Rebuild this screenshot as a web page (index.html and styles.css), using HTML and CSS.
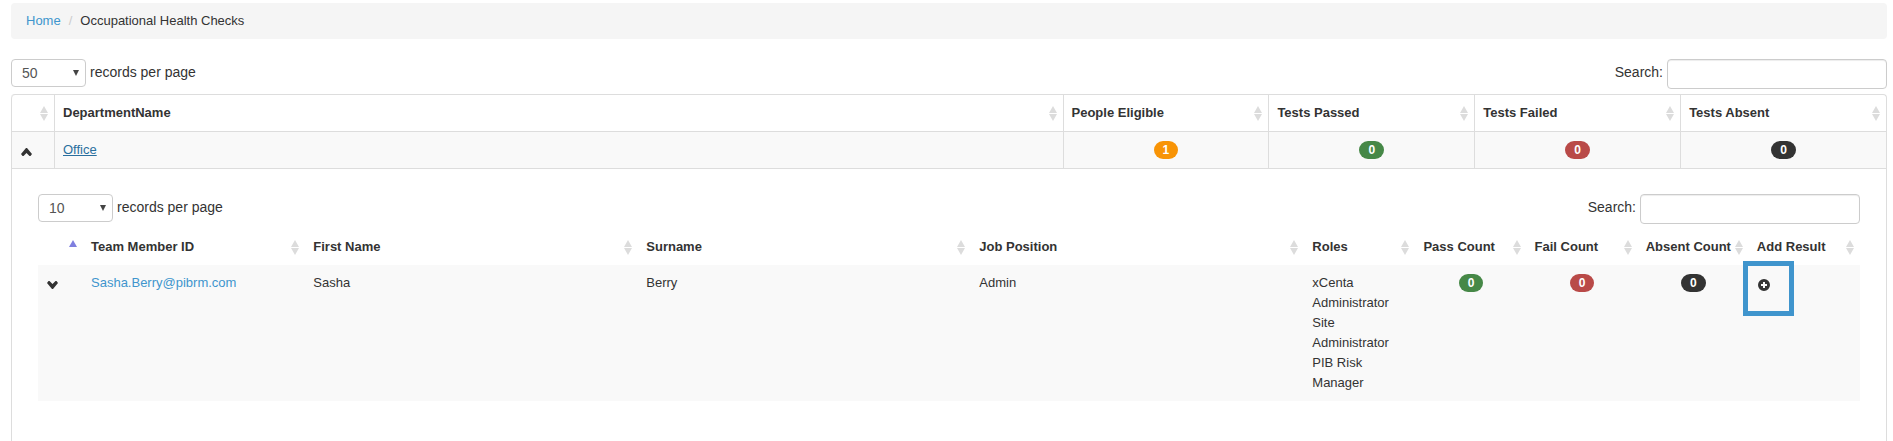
FILE: index.html
```html
<!DOCTYPE html>
<html lang="en">
<head>
    <meta charset="UTF-8">
    <meta name="viewport" content="width=device-width, initial-scale=1.0">
    <title>Occupational Health Checks</title>
    <link rel="stylesheet" href="styles.css">
</head>
<body>
    <svg class="sprite" aria-hidden="true">
        <symbol id="sort" viewBox="0 0 8 15">
            <path d="M4 0 L8 7 H0 Z M0 8 H8 L4 15 Z"/>
        </symbol>
        <symbol id="sort-asc" viewBox="0 0 8 15">
            <path d="M4 0 L8 7 H0 Z"/>
        </symbol>
        <symbol id="chevron-up" viewBox="0 0 14 14">
            <path d="M1 9 L6 3 H7 L12 9 L10.5 11 H9.5 L6.5 8 L3.5 11 H2.5 Z"/>
        </symbol>
        <symbol id="chevron-down" viewBox="0 0 14 14">
            <path d="M1 5 L2.5 3 H3.5 L6.5 6 L9.5 3 H10.5 L12 5 L7 11 H6 Z"/>
        </symbol>
        <symbol id="plus-sign" viewBox="0 0 14 14">
            <path fill-rule="evenodd" d="M7 1 A6 6 0 1 1 7 13 A6 6 0 1 1 7 1 Z M6 4 V6 H4 V8 H6 V10 H8 V8 H10 V6 H8 V4 Z"/>
        </symbol>
    </svg>

    <nav>
        <ol class="breadcrumb">
            <li><a href="#">Home</a></li>
            <li>Occupational Health Checks</li>
        </ol>
    </nav>

    <div class="table-tools">
        <label><select><option>10</option><option>25</option><option selected>50</option></select> records per page</label>
        <label>Search: <input type="text"></label>
    </div>

    <table class="table departments">
        <colgroup>
            <col class="col-toggle"><col><col class="col-tests"><col class="col-tests"><col class="col-tests"><col class="col-tests">
        </colgroup>
        <thead>
            <tr>
                <th><button class="sort" aria-label="Sort"><span></span><svg><use href="#sort"/></svg></button></th>
                <th><button class="sort">DepartmentName <svg><use href="#sort"/></svg></button></th>
                <th><button class="sort">People Eligible <svg><use href="#sort"/></svg></button></th>
                <th><button class="sort">Tests Passed <svg><use href="#sort"/></svg></button></th>
                <th><button class="sort">Tests Failed <svg><use href="#sort"/></svg></button></th>
                <th><button class="sort">Tests Absent <svg><use href="#sort"/></svg></button></th>
            </tr>
        </thead>
        <tbody>
            <tr class="odd">
                <td><button class="icon" aria-label="Hide people"><svg><use href="#chevron-up"/></svg></button></td>
                <td><a href="#" class="active">Office</a></td>
                <td class="center"><span class="badge badge-warning">1</span></td>
                <td class="center"><span class="badge badge-success">0</span></td>
                <td class="center"><span class="badge badge-important">0</span></td>
                <td class="center"><span class="badge badge-inverse">0</span></td>
            </tr>
            <tr>
                <td colspan="6" class="details">
                    <div class="table-tools">
                        <label><select><option selected>10</option><option>25</option><option>50</option></select> records per page</label>
                        <label>Search: <input type="text"></label>
                    </div>

                    <table class="table people">
                        <colgroup>
                            <col class="col-expand"><col class="col-member"><col><col><col>
                            <col class="col-count"><col class="col-count"><col class="col-count"><col class="col-count"><col class="col-count">
                        </colgroup>
                        <thead>
                            <tr>
                                <th><button class="sort sort-active" aria-label="Sort"><span></span><svg><use href="#sort-asc"/></svg></button></th>
                                <th><button class="sort">Team Member ID <svg><use href="#sort"/></svg></button></th>
                                <th><button class="sort">First Name <svg><use href="#sort"/></svg></button></th>
                                <th><button class="sort">Surname <svg><use href="#sort"/></svg></button></th>
                                <th><button class="sort">Job Position <svg><use href="#sort"/></svg></button></th>
                                <th><button class="sort">Roles <svg><use href="#sort"/></svg></button></th>
                                <th><button class="sort">Pass Count <svg><use href="#sort"/></svg></button></th>
                                <th><button class="sort">Fail Count <svg><use href="#sort"/></svg></button></th>
                                <th><button class="sort">Absent Count <svg><use href="#sort"/></svg></button></th>
                                <th><button class="sort">Add Result <svg><use href="#sort"/></svg></button></th>
                            </tr>
                        </thead>
                        <tbody>
                            <tr class="odd">
                                <td><button class="icon" aria-label="Show results"><svg><use href="#chevron-down"/></svg></button></td>
                                <td><a href="#">Sasha.Berry@pibrm.com</a></td>
                                <td>Sasha</td>
                                <td>Berry</td>
                                <td>Admin</td>
                                <td>xCenta Administrator<br>Site Administrator<br>PIB Risk Manager</td>
                                <td class="center"><span class="badge badge-success">0</span></td>
                                <td class="center"><span class="badge badge-important">0</span></td>
                                <td class="center"><span class="badge badge-inverse">0</span></td>
                                <td><button class="icon highlight" aria-label="Add result"><svg><use href="#plus-sign"/></svg></button></td>
                            </tr>
                        </tbody>
                    </table>
                </td>
            </tr>
        </tbody>
    </table>
</body>
</html>
```
FILE: styles.css
```css
*, *::before, *::after {
    box-sizing: border-box;
}
body {
    margin: 3px 6px 0 11px;
    font-family: "Liberation Sans", Arial, sans-serif;
    font-size: 13px;
    line-height: 20px;
    color: #333;
    background-color: #fff;
}
a {
    color: #4095cd;
    text-decoration: none;
}
a:hover, a.active {
    color: #2a6f9e;
    text-decoration: underline;
}
.sprite {
    display: none;
}

/* breadcrumb */
.breadcrumb {
    display: flex;
    margin: 0 0 20px;
    padding: 8px 15px;
    list-style: none;
    background-color: #f5f5f5;
    border-radius: 4px;
}
.breadcrumb li + li::before {
    content: "/";
    padding: 0 8px;
    color: #ccc;
}

/* page length and search */
.table-tools {
    display: flex;
    justify-content: space-between;
    align-items: flex-start;
    margin-bottom: 5px;
    font-size: 14px;
    line-height: 26px;
}
.table-tools label {
    display: flex;
    align-items: flex-start;
    gap: 4px;
}
select, input {
    font-family: inherit;
    font-size: 14px;
    color: #555;
    background-color: #fff;
    border: 1px solid #ccc;
    border-radius: 4px;
}
select {
    width: 75px;
    height: 28px;
    padding: 0 10px;
    appearance: none;
    background-image: url("data:image/svg+xml,%3Csvg xmlns='http://www.w3.org/2000/svg' viewBox='0 0 6 6'%3E%3Cpath fill='%23444' d='M0 0H6L3 6Z'/%3E%3C/svg%3E");
    background-repeat: no-repeat;
    background-position: right 6px center;
    background-size: 6px 6px;
}
input {
    width: 220px;
    height: 30px;
    padding: 4px 6px;
    box-shadow: inset 0 1px 1px rgba(0, 0, 0, 0.075);
}

/* tables */
.table {
    width: 100%;
    table-layout: fixed;
    border-collapse: separate;
    border-spacing: 0;
}
.table th, .table td {
    padding: 8px;
    text-align: left;
    vertical-align: top;
}
.table th {
    padding-right: 6px;
}
.table .odd td {
    background-color: #f9f9f9;
}
.table .center {
    text-align: center;
}
.departments {
    border: 1px solid #ddd;
    border-width: 1px 1px 0 0;
    border-radius: 4px 4px 0 0;
}
.departments > thead th, .departments > tbody > tr > td {
    border-left: 1px solid #ddd;
}
.departments > tbody > tr > td {
    border-top: 1px solid #ddd;
}
.departments > thead th:first-child {
    border-top-left-radius: 4px;
}
.departments > tbody > tr > .details {
    padding: 25px 26px 40px;
}
.col-toggle {
    width: 43px;
}
.col-tests {
    width: 10.98%;
}
.col-expand {
    width: 45px;
}
.col-member {
    width: 12.2%;
}
.col-count {
    width: 6.1%;
}

/* sortable headings */
.sort {
    display: flex;
    justify-content: space-between;
    align-items: center;
    width: 100%;
    height: 20px;
    padding: 0;
    border: none;
    background: none;
    font: inherit;
    color: inherit;
    line-height: 20px;
    white-space: nowrap;
    cursor: pointer;
}
.sort svg {
    width: 8px;
    height: 15px;
    margin-top: 1px;
    fill: #dcdcdc;
}
.sort-active svg {
    fill: #7f7fdf;
}

.icon {
    position: relative;
    display: block;
    width: 14px;
    height: 14px;
    margin-top: 5px;
    padding: 0;
    border: none;
    background: none;
    cursor: pointer;
}
.icon svg {
    display: block;
    width: 14px;
    height: 14px;
    fill: #333;
}
.highlight::after {
    content: "";
    position: absolute;
    top: -17px;
    left: -14px;
    width: 51px;
    height: 55px;
    border: 5px solid #4095cd;
}

.badge {
    display: inline-block;
    padding: 2px 9px;
    border-radius: 9px;
    font-size: 12px;
    font-weight: bold;
    line-height: 14px;
    color: #fff;
    vertical-align: top;
    margin-top: 1px;
}
.badge-warning {
    background-color: #f89406;
}
.badge-success {
    background-color: #468847;
}
.badge-important {
    background-color: #b94a48;
}
.badge-inverse {
    background-color: #333;
}
```
